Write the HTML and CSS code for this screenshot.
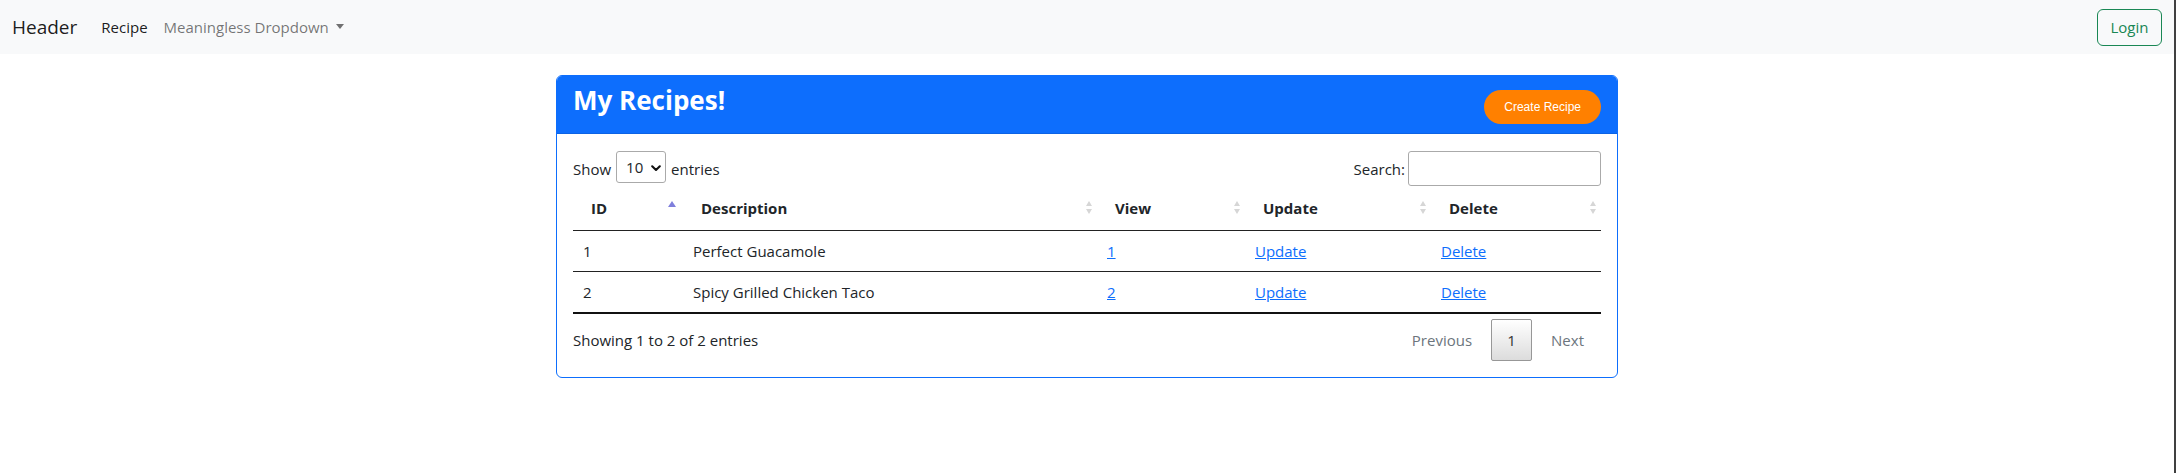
FILE: index.html
```html
<!DOCTYPE html>
<html lang="en">
<head>
<meta charset="utf-8">
<title>My Recipes</title>
<link rel="stylesheet" href="styles.css">
</head>
<body>
<div class="frame">
  <nav class="navbar">
    <div class="nav-left">
      <a class="brand" href="#">Header</a>
      <ul class="nav-links">
        <li><a class="nav-link active" href="#">Recipe</a></li>
        <li><a class="nav-link dropdown-toggle" href="#">Meaningless Dropdown<span class="caret"></span></a></li>
      </ul>
    </div>
    <button class="btn-login" type="button">Login</button>
  </nav>

  <main class="main">
    <section class="card">
      <header class="card-header">
        <h3 class="card-title">My Recipes!</h3>
        <button class="btn-create" type="button">Create Recipe</button>
      </header>
      <div class="card-body">
        <div class="dt-top">
          <div class="dt-length">
            <span>Show</span>
            <span class="select-wrap">
              <select class="dt-select"><option>10</option><option>25</option><option>50</option></select>
              <svg class="chev" width="10" height="7" viewBox="0 0 10 7"><path d="M1.2 1.3 L5 5 L8.8 1.3" fill="none" stroke="#111" stroke-width="2.1" stroke-linecap="round" stroke-linejoin="round"/></svg>
            </span>
            <span>entries</span>
          </div>
          <label class="dt-filter">Search:<input class="dt-search" type="search"></label>
        </div>

        <table class="dt">
          <colgroup>
            <col class="c-id"><col class="c-desc"><col class="c-view"><col class="c-upd"><col class="c-del">
          </colgroup>
          <thead>
            <tr>
              <th>ID<span class="sort-asc"></span></th>
              <th>Description<span class="sort"><i class="up"></i><i class="down"></i></span></th>
              <th>View<span class="sort"><i class="up"></i><i class="down"></i></span></th>
              <th>Update<span class="sort"><i class="up"></i><i class="down"></i></span></th>
              <th>Delete<span class="sort"><i class="up"></i><i class="down"></i></span></th>
            </tr>
          </thead>
          <tbody>
            <tr>
              <td>1</td>
              <td>Perfect Guacamole</td>
              <td><a href="#">1</a></td>
              <td><a href="#">Update</a></td>
              <td><a href="#">Delete</a></td>
            </tr>
            <tr>
              <td>2</td>
              <td>Spicy Grilled Chicken Taco</td>
              <td><a href="#">2</a></td>
              <td><a href="#">Update</a></td>
              <td><a href="#">Delete</a></td>
            </tr>
          </tbody>
        </table>

        <div class="dt-bottom">
          <div class="dt-info">Showing 1 to 2 of 2 entries</div>
          <div class="dt-paginate">
            <a class="pg disabled">Previous</a>
            <a class="pg current">1</a>
            <a class="pg disabled">Next</a>
          </div>
        </div>
      </div>
    </section>
  </main>
</div>
</body>
</html>
```

FILE: styles.css
```css
* { box-sizing: border-box; }

html, body {
  margin: 0;
  padding: 0;
  background: #fff;
}

body {
  font-family: "Open Sans", "Noto Sans", "Liberation Sans", sans-serif;
  font-size: 15px;
  line-height: 24px;
  color: #212529;
}

.frame {
  min-height: 100vh;
  border-right: 2px solid #404040;
}

/* ---------- navbar ---------- */
.navbar {
  height: 54px;
  background: #f8f9fa;
  display: flex;
  align-items: center;
  justify-content: space-between;
  padding: 0 12px;
}

.nav-left {
  display: flex;
  align-items: center;
}

.brand {
  font-size: 19px;
  line-height: 30px;
  color: rgba(0, 0, 0, 0.9);
  text-decoration: none;
  margin-right: 16px;
}

.nav-links {
  list-style: none;
  margin: 0;
  padding: 0;
  display: flex;
}

.nav-link {
  display: block;
  padding: 8px;
  color: rgba(0, 0, 0, 0.55);
  text-decoration: none;
}

.nav-link.active {
  color: rgba(0, 0, 0, 0.9);
}

.caret {
  display: inline-block;
  margin-left: 7px;
  vertical-align: 4px;
  border-top: 5px solid rgba(0, 0, 0, 0.55);
  border-left: 4.5px solid transparent;
  border-right: 4.5px solid transparent;
}

.btn-login {
  width: 65px;
  height: 37px;
  padding: 0;
  font: inherit;
  color: #198754;
  background: transparent;
  border: 1px solid #198754;
  border-radius: 6px;
}

/* ---------- card ---------- */
.main {
  padding-top: 21px;
}

.card {
  width: 1062px;
  margin: 0 auto;
  border: 1px solid #0d6efd;
  border-radius: 6px;
  overflow: hidden;
  background: #fff;
}

.card-header {
  background: #0d6efd;
  display: flex;
  justify-content: space-between;
  align-items: flex-start;
  padding: 8px 16px 8px 16px;
  border-bottom: 1px solid #0c63e4;
}

.card-title {
  margin: 0 0 8px;
  font-size: 26px;
  line-height: 33px;
  font-weight: 700;
  color: #fff;
}

.btn-create {
  margin-top: 6px;
  height: 34px;
  padding: 0 20px;
  border: none;
  border-radius: 17px;
  background: #ff8000;
  color: #fff;
  font-family: "Liberation Sans", Arial, sans-serif;
  font-size: 12px;
}

.card-body {
  padding: 17px 16px 16px;
}

/* ---------- datatable controls ---------- */
.dt-top {
  display: flex;
  justify-content: space-between;
  align-items: flex-start;
  height: 35px;
}

.dt-length {
  display: flex;
  align-items: center;
  height: 36px;
  gap: 5px;
}

.select-wrap {
  position: relative;
  align-self: flex-start;
  display: block;
  width: 50px;
  height: 32px;
}

.dt-select {
  appearance: none;
  -webkit-appearance: none;
  width: 50px;
  height: 32px;
  padding: 0 0 0 9px;
  border: 1px solid #aaa;
  border-radius: 3px;
  background: #fff;
  font: inherit;
  color: #212529;
}

.chev {
  position: absolute;
  left: 35px;
  top: 14px;
  pointer-events: none;
}

.dt-filter {
  display: flex;
  align-items: center;
  height: 35px;
}

.dt-search {
  width: 193px;
  height: 35px;
  margin-left: 3px;
  border: 1px solid #aaa;
  border-radius: 3px;
  padding: 4px;
  font: inherit;
}

/* ---------- table ---------- */
.dt {
  width: 100%;
  border-collapse: collapse;
  table-layout: fixed;
}

.c-id { width: 110px; }
.c-desc { width: 414px; }
.c-view { width: 148px; }
.c-upd { width: 186px; }
.c-del { width: 170px; }

.dt th {
  position: relative;
  text-align: left;
  font-weight: 700;
  padding: 10px 18px;
  border-bottom: 1px solid #222;
}

.dt td {
  padding: 8px 10px;
  border-bottom: 1px solid #222;
}

.dt tbody tr:last-child td {
  border-bottom: 2px solid #111;
}

.dt a {
  color: #0d6efd;
  text-decoration: underline;
}

.sort-asc {
  position: absolute;
  right: 7px;
  top: 15px;
  width: 0;
  height: 0;
  border-left: 4px solid transparent;
  border-right: 4px solid transparent;
  border-bottom: 6px solid #7f7fdc;
}

.sort {
  position: absolute;
  right: 4px;
  top: 15px;
  width: 7px;
  display: flex;
  flex-direction: column;
  gap: 3px;
}

.sort i {
  display: block;
  width: 0;
  height: 0;
  border-left: 3.5px solid transparent;
  border-right: 3.5px solid transparent;
}

.sort .up { border-bottom: 5px solid #d6d6d6; }
.sort .down { border-top: 5px solid #d6d6d6; }

/* ---------- footer ---------- */
.dt-bottom {
  display: flex;
  justify-content: space-between;
  align-items: flex-start;
}

.dt-info {
  padding-top: 14px;
}

.dt-paginate {
  padding-top: 5px;
  display: flex;
}

.pg {
  display: block;
  margin-left: 2px;
  padding: 8px 16px;
  border: 1px solid transparent;
  border-radius: 2px;
  line-height: 24px;
  color: #6c757d;
  cursor: default;
}

.pg.current {
  width: 41px;
  padding: 8px 0;
  text-align: center;
  color: #333;
  border-color: #979797;
  background: linear-gradient(to bottom, #fff 0%, #dcdcdc 100%);
}
```
